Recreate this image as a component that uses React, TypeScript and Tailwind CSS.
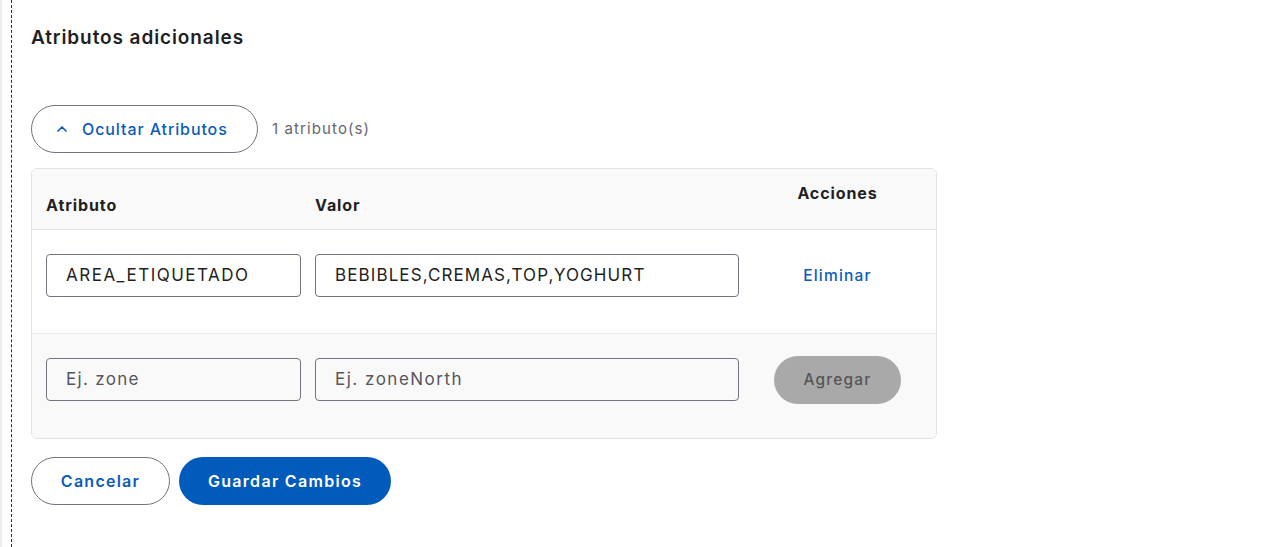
import { ChevronUp } from 'lucide-react';

const font = { fontFamily: 'Inter, "Open Sans", sans-serif' };

export default function App() {
  return (
    <div className="flex h-[547px] w-full bg-white text-[#1f1f1f]" style={font}>
      <div className="w-[2px] bg-[#ececec]" />
      <div className="ml-[9px] border-l border-dashed border-[#2b2b3a]" />
      <main className="flex-1 pl-[19px] pt-[25px]">
        <h2 className="text-[19px] font-semibold leading-[26px] tracking-[0.9px]">Atributos adicionales</h2>

        <div className="mt-[54px] flex items-center gap-[14px]">
          <button className="flex h-[48px] w-[227px] items-center gap-[12px] rounded-full border border-[#74747e] pl-[22px] text-[16px] font-medium tracking-[0.9px] text-[#0b5cb8]">
            <ChevronUp className="h-[16px] w-[16px]" strokeWidth={2.5} />
            Ocultar Atributos
          </button>
          <span className="text-[15px] tracking-[1.1px] text-[#666670]">1 atributo(s)</span>
        </div>

        <div className="mt-[15px] w-[906px] overflow-hidden rounded-[6px] border border-[#e3e3e3]">
          <div className="grid h-[61px] grid-cols-[269px_424px_1fr] border-b border-[#e8e8e8] bg-[#f9f9f9] pl-[14px] text-[16px] font-bold tracking-[0.9px]">
            <div className="pt-[24px]">Atributo</div>
            <div className="pt-[24px]">Valor</div>
            <div className="pt-[12px] text-center">Acciones</div>
          </div>

          <div className="grid h-[104px] grid-cols-[269px_424px_1fr] border-b border-[#ececec] bg-white pl-[14px] pt-[24px]">
            <div className="flex h-[43px] w-[255px] items-center rounded-[4px] border border-[#74747e] pl-[19px] text-[17px] tracking-[1.5px] text-[#1f1f1f]">
              AREA_ETIQUETADO
            </div>
            <div className="flex h-[43px] items-center rounded-[4px] border border-[#74747e] pl-[19px] text-[17px] tracking-[1.1px] text-[#1f1f1f]">
              BEBIBLES,CREMAS,TOP,YOGHURT
            </div>
            <div className="flex h-[43px] items-center justify-center text-[15.5px] font-medium tracking-[1.2px] text-[#0b5cb8]">
              Eliminar
            </div>
          </div>

          <div className="grid h-[104px] grid-cols-[269px_424px_1fr] bg-[#f9f9f9] pl-[14px] pt-[24px]">
            <div className="flex h-[43px] w-[255px] items-center rounded-[4px] border border-[#74747e] pl-[19px] text-[17px] tracking-[1.3px] text-[#55555d]">
              Ej. zone
            </div>
            <div className="flex h-[43px] items-center rounded-[4px] border border-[#74747e] pl-[19px] text-[17px] tracking-[1.5px] text-[#55555d]">
              Ej. zoneNorth
            </div>
            <div className="flex h-[43px] items-center justify-center">
              <button className="h-[48px] w-[127px] rounded-full bg-[#a9a9a9] text-[15.5px] font-medium tracking-[1.2px] text-[#555558]">
                Agregar
              </button>
            </div>
          </div>
        </div>

        <div className="mt-[18px] flex gap-[9px]">
          <button className="h-[48px] w-[139px] rounded-full border border-[#74747e] text-[16px] font-semibold tracking-[1.25px] text-[#0b5cb8]">
            Cancelar
          </button>
          <button className="h-[48px] w-[212px] rounded-full bg-[#005bbb] text-[16px] font-semibold tracking-[1.3px] text-white">
            Guardar Cambios
          </button>
        </div>
      </main>
    </div>
  );
}
